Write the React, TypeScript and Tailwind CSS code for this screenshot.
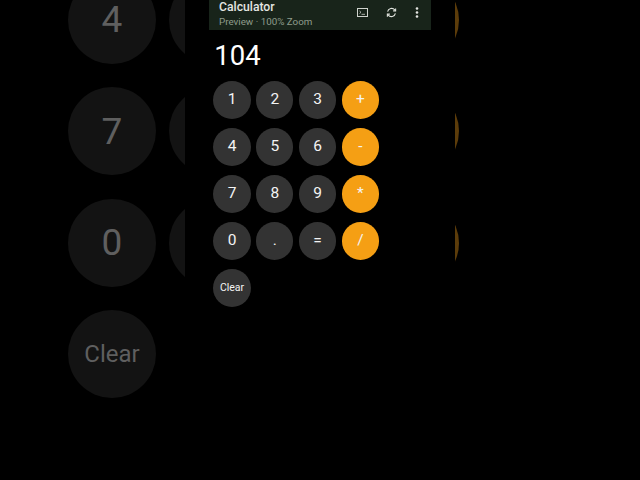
import type { ReactNode } from "react";

const KEYS = [
  ["1", "2", "3", "+"],
  ["4", "5", "6", "-"],
  ["7", "8", "9", "*"],
  ["0", ".", "=", "/"],
];

function Key({ label, accent, small }: { label: string; accent?: boolean; small?: boolean }) {
  return (
    <div
      className={`flex h-[37.4px] w-[37.4px] items-center justify-center rounded-full text-[#f4f4f4] ${
        accent ? "bg-[#f59f14]" : "bg-[#333333]"
      } ${small ? "text-[10.5px]" : "text-[15.5px]"}`}
    >
      {label}
    </div>
  );
}

function GhostCircle({ children, className }: { children?: ReactNode; className: string }) {
  return (
    <div className={`flex h-[88px] w-[88px] shrink-0 items-center justify-center rounded-full ${className}`}>
      {children}
    </div>
  );
}

// left part of the dimmed, zoomed keypad behind the app; only the first column shows its labels
function GhostLeft() {
  return (
    <div className="flex flex-col gap-[23.3px]">
      {["4", "7", "0"].map((k) => (
        <div key={k} className="flex gap-[13px]">
          <GhostCircle className="bg-[#131313] text-[37px] text-[#5f5f5f]">{k}</GhostCircle>
          <GhostCircle className="bg-[#131313]" />
        </div>
      ))}
      <GhostCircle className="bg-[#131313] text-[24px] text-[#5f5f5f]">Clear</GhostCircle>
    </div>
  );
}

// right edge of the same keypad: only the orange keys peek out
function GhostRight() {
  return (
    <div className="-ml-[84px] flex flex-col gap-[23.3px]">
      {[0, 1, 2].map((n) => (
        <GhostCircle key={n} className="bg-[#5c3c0a]" />
      ))}
    </div>
  );
}

function IconButton({ children }: { children: ReactNode }) {
  return <div className="flex h-[14px] w-[14px] items-center justify-center">{children}</div>;
}

function Header() {
  return (
    <div className="flex h-[30px] items-end justify-between bg-[#18241a] pb-[2px] pl-[10px] pr-[7px]">
      <div className="flex flex-col">
        <span className="text-[12.2px] leading-[15px] font-medium text-[#e4e7e2]">Calculator</span>
        <span className="text-[9.8px] leading-[13px] text-[#8f9c8c]">Preview · 100% Zoom</span>
      </div>
      <div className="mb-[9px] flex items-center gap-[12px]">
        <div className="mr-[3px]">
          <IconButton>
            <svg width="11" height="9" viewBox="0 0 11 9" fill="none" stroke="#cfd3cd" strokeWidth="1">
              <rect x="0.5" y="0.5" width="10" height="8" />
              <path d="M2.5 3 L4 4.3 L2.5 5.6 M4.5 6.3 H8" strokeWidth="0.8" />
            </svg>
          </IconButton>
        </div>
        <IconButton>
          <svg width="11" height="11" viewBox="0 0 24 24" fill="none" stroke="#dfe2dc" strokeWidth="2.4">
            <path d="M3.5 10a8.8 8.8 0 0 1 15.6-3.6L21 8.5" />
            <path d="M21 3v5.5h-5.5" />
            <path d="M20.5 14a8.8 8.8 0 0 1-15.6 3.6L3 15.5" />
            <path d="M3 21v-5.5h5.5" />
          </svg>
        </IconButton>
        <IconButton>
          <svg width="4" height="11" viewBox="0 0 4 11" fill="#e4e6e2">
            <circle cx="2" cy="1.5" r="1.3" />
            <circle cx="2" cy="5.5" r="1.3" />
            <circle cx="2" cy="9.5" r="1.3" />
          </svg>
        </IconButton>
      </div>
    </div>
  );
}

export default function App() {
  return (
    <div className="relative h-[480px] w-[640px] overflow-hidden bg-black font-['Roboto',sans-serif]">
      <div className="absolute -top-[24px] left-0 h-[504px] w-[185px] overflow-hidden pl-[68px]">
        <GhostLeft />
      </div>
      <div className="absolute -top-[24px] left-[455px] h-[300px] w-[4px] overflow-hidden">
        <GhostRight />
      </div>

      <div className="absolute inset-y-0 left-[209px] w-[222px]">
        <Header />
        <div className="pl-[4.3px]">
          <div className="mt-[9px] pl-[1px] text-[27.5px] leading-[33px] text-white">104</div>
          <div className="mt-[9.4px] flex flex-col gap-[9.6px]">
            {KEYS.map((row) => (
              <div key={row[0]} className="flex gap-[5.4px]">
                {row.map((k, i) => (
                  <Key key={k} label={k} accent={i === 3} />
                ))}
              </div>
            ))}
            <Key label="Clear" small />
          </div>
        </div>
      </div>
    </div>
  );
}
